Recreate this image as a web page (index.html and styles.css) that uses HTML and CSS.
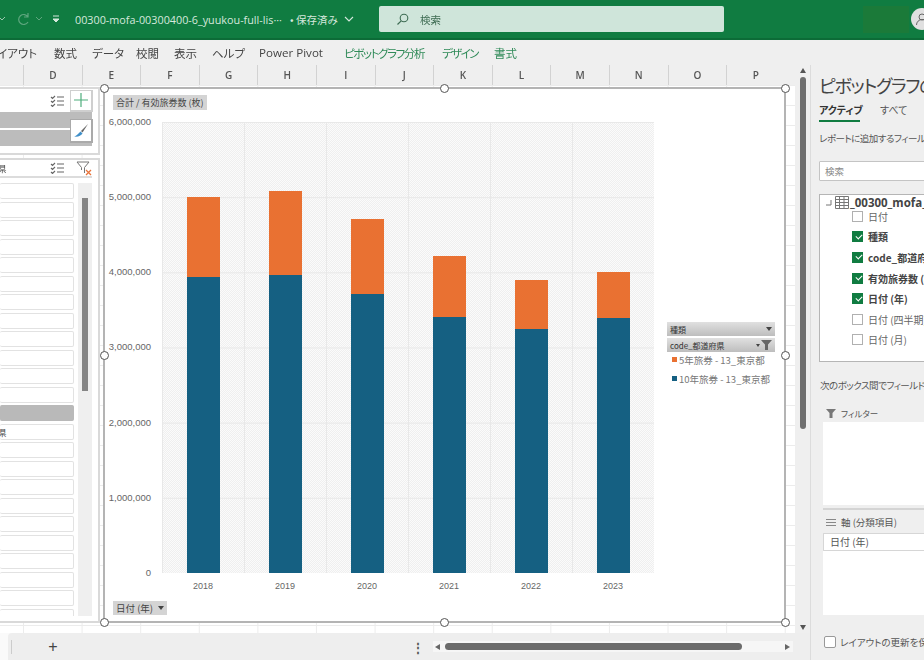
FILE: index.html
```html
<!DOCTYPE html>
<html lang="ja">
<head>
<meta charset="utf-8">
<title>Excel ピボットグラフ</title>
<link rel="stylesheet" href="styles.css">
</head>
<body>
<div class="app">
  <header class="titlebar">
    <svg class="ico chev-a" width="8" height="6" viewBox="0 0 8 6"><path d="M1 1l3 3 3-3" fill="none" stroke="#9cc7ae" stroke-width="1"/></svg>
    <svg class="ico redo" width="14" height="14" viewBox="0 0 14 14"><path d="M11 5A5 5 0 1 0 11 10M11 1v4H7" fill="none" stroke="#5ea67e" stroke-width="1.2"/></svg>
    <svg class="ico chev-b" width="8" height="6" viewBox="0 0 8 6"><path d="M1 1l3 3 3-3" fill="none" stroke="#5ea67e" stroke-width="1"/></svg>
    <svg class="ico custom" width="8" height="9" viewBox="0 0 8 9"><path d="M1 1h6M1 4l3 3 3-3z" fill="#d5e8dd" stroke="#d5e8dd" stroke-width="1"/></svg>
    <span class="filename">00300-mofa-00300400-6_yuukou-full-lis···</span>
    <span class="saved">• 保存済み</span>
    <svg class="ico chev-c" width="10" height="6" viewBox="0 0 10 6"><path d="M1 1l4 4 4-4" fill="none" stroke="#d5e8dd" stroke-width="1.1"/></svg>
    <div class="search">
      <svg width="13" height="13" viewBox="0 0 13 13"><circle cx="8" cy="5" r="3.8" fill="none" stroke="#3d6b52" stroke-width="1.1"/><path d="M5.2 7.8L1.5 11.5" stroke="#3d6b52" stroke-width="1.2"/></svg>
      <span>検索</span>
    </div>
    <div class="account"></div>
    <div class="avatar">
      <svg width="14" height="14" viewBox="0 0 14 14"><circle cx="7" cy="5" r="3" fill="none" stroke="#666" stroke-width="1"/><path d="M1.5 13a5.5 5.5 0 0 1 11 0" fill="none" stroke="#666" stroke-width="1"/></svg>
    </div>
  </header>

  <nav class="ribbon">
    <span class="tab first">レイアウト</span>
    <span class="tab t2">数式</span>
    <span class="tab t3">データ</span>
    <span class="tab t4">校閲</span>
    <span class="tab t5">表示</span>
    <span class="tab t6">ヘルプ</span>
    <span class="tab t7">Power Pivot</span>
    <span class="tab ctx t8">ピボットグラフ分析</span>
    <span class="tab ctx t9">デザイン</span>
    <span class="tab ctx t10">書式</span>
  </nav>

  <div class="content">
    <div class="workspace">
      <div class="upper">
        <div class="sheetcol">
          <div class="colheads">
            <span class="colhead">D</span><span class="colhead">E</span><span class="colhead">F</span><span class="colhead">G</span><span class="colhead">H</span><span class="colhead">I</span><span class="colhead">J</span><span class="colhead">K</span><span class="colhead">L</span><span class="colhead">M</span><span class="colhead">N</span><span class="colhead">O</span><span class="colhead">P</span>
          </div>
          <div class="sheet">
            <div class="slicers">
              <section class="slicer one">
                <div class="slicer-head one-head">
                  <svg class="multi" width="14" height="12" viewBox="0 0 14 12"><path d="M1 2l1.5 1.5L5 1M1 6l1.5 1.5L5 5M1 10l1.5 1.5L5 9M7 2h7M7 6h7M7 10h7" fill="none" stroke="#666" stroke-width="1.1"/></svg>
                  <div class="sl-btn"><svg width="16" height="16" viewBox="0 0 16 16"><path d="M8 1v14M1 8h14" stroke="#4fae7d" stroke-width="1.2"/></svg></div>
                </div>
                <div class="band"></div>
                <div class="band"></div>
                <div class="sl-btn brush"><svg width="16" height="16" viewBox="0 0 16 16"><path d="M15 1L8 8l1.5 1.5z" fill="#666"/><path d="M7.5 8.5l2 2C8 13 5 14 1 13.5c2-.5 3.500-2 6.500-5z" fill="#3f8fc9"/></svg></div>
              </section>
              <section class="slicer two">
                <div class="slicer-head two-head">
                  <span class="cut">県</span>
                  <svg class="multi" width="14" height="12" viewBox="0 0 14 12"><path d="M1 2l1.500 1.500L5 1M1 6l1.500 1.500L5 5M1 10l1.500 1.500L5 9M7 2h7M7 6h7M7 10h7" fill="none" stroke="#666" stroke-width="1.1"/></svg>
                  <svg class="clear" width="16" height="15" viewBox="0 0 16 15"><path d="M1 1h12L8.500 6.500V12" fill="none" stroke="#777" stroke-width="1"/><path d="M1 1l4.500 5.500V9" fill="none" stroke="#777" stroke-width="1"/><path d="M10 9l5 5M15 9l-5 5" stroke="#e8743b" stroke-width="1.3"/></svg>
                </div>
                <div class="slicer-body">
                  <div class="items">
                    <div class="item"></div><div class="item"></div><div class="item"></div><div class="item"></div><div class="item"></div><div class="item"></div><div class="item"></div><div class="item"></div><div class="item"></div><div class="item"></div><div class="item"></div><div class="item"></div>
                    <div class="item on"></div>
                    <div class="item"><span class="cut">県</span></div>
                    <div class="item"></div><div class="item"></div><div class="item"></div><div class="item"></div><div class="item"></div><div class="item"></div><div class="item"></div><div class="item"></div><div class="item"></div><div class="item"></div>
                  </div>
                  <div class="track"><div class="thumb"></div></div>
                </div>
              </section>
            </div>

            <div class="chart">
              <div class="title-cell"><span class="fieldbtn">合計 / 有効旅券数 (枚)</span></div>
              <div class="axis">
                <span class="tick">6,000,000</span><span class="tick">5,000,000</span><span class="tick">4,000,000</span><span class="tick">3,000,000</span><span class="tick">2,000,000</span><span class="tick">1,000,000</span><span class="tick">0</span>
              </div>
              <div class="plot">
                <div class="col"><div class="seg orange" style="height:17.74%"></div><div class="seg blue" style="height:65.63%"></div></div>
                <div class="col"><div class="seg orange" style="height:18.63%"></div><div class="seg blue" style="height:66.08%"></div></div>
                <div class="col"><div class="seg orange" style="height:16.63%"></div><div class="seg blue" style="height:61.86%"></div></div>
                <div class="col"><div class="seg orange" style="height:13.53%"></div><div class="seg blue" style="height:56.76%"></div></div>
                <div class="col"><div class="seg orange" style="height:10.86%"></div><div class="seg blue" style="height:54.10%"></div></div>
                <div class="col"><div class="seg orange" style="height:10.20%"></div><div class="seg blue" style="height:56.54%"></div></div>
              </div>
              <div class="legend">
                <div class="lg-btn"><span>種類</span><i class="tri"></i></div>
                <div class="lg-btn"><span>code_都道府県</span><i class="tri small"></i><svg width="11" height="10" viewBox="0 0 11 10"><path d="M0 0h11L7 4.500V10H4V4.500z" fill="#666"/></svg></div>
                <div class="lg-item"><i class="swatch sw-o"></i>5年旅券 - 13_東京都</div>
                <div class="lg-item"><i class="swatch sw-b"></i>10年旅券 - 13_東京都</div>
              </div>
              <div class="years">
                <span>2018</span><span>2019</span><span>2020</span><span>2021</span><span>2022</span><span>2023</span>
              </div>
              <div class="axisbtn"><span class="fieldbtn">日付 (年)<i class="tri"></i></span></div>

              <i class="handle h-tl"></i><i class="handle h-tc"></i><i class="handle h-tr"></i>
              <i class="handle h-ml"></i><i class="handle h-mr"></i>
              <i class="handle h-bl"></i><i class="handle h-bc"></i><i class="handle h-br"></i>
            </div>
          </div>
        </div>
        <div class="vscroll">
          <i class="arrow up"></i>
          <div class="vthumb"></div>
          <i class="arrow down"></i>
        </div>
      </div>
      <footer class="tabbar">
        <div class="sheet-stub"><span>E</span></div>
        <div class="tabstrip">
          <span class="tabsep"></span>
          <span class="addsheet">+</span>
          <span class="dots">⋮</span>
          <div class="hscroll">
            <i class="arrow left"></i>
            <div class="hthumb"></div>
            <i class="arrow right"></i>
          </div>
        </div>
      </footer>
    </div>

    <aside class="panel">
      <h2 class="panel-title">ピボットグラフのフィールド</h2>
      <div class="panel-tabs">
        <span class="ptab active">アクティブ</span>
        <span class="ptab">すべて</span>
      </div>
      <p class="hint h1">レポートに追加するフィールドを選択してください:</p>
      <div class="psearch">検索</div>
      <div class="fields">
        <div class="root">
          <svg class="conn" width="7" height="6" viewBox="0 0 7 6"><path d="M6 0v5H1" fill="none" stroke="#777" stroke-width="1"/></svg>
          <svg class="tbl" width="14" height="13" viewBox="0 0 14 13"><path d="M.5.500h13v12H.5zM.5 3.500h13M.5 6.500h13M.5 9.500h13M4.500.500v12M9 .500v12" fill="none" stroke="#777" stroke-width="1"/></svg>
          <b>_00300_mofa_00300400</b>
        </div>
        <div class="frow first-row"><i class="cb"></i><span>日付</span></div>
        <div class="frow sel"><i class="cb on"></i><span>種類</span></div>
        <div class="frow sel"><i class="cb on"></i><span>code_都道府県</span></div>
        <div class="frow sel"><i class="cb on"></i><span>有効旅券数 (枚)</span></div>
        <div class="frow sel"><i class="cb on"></i><span>日付 (年)</span></div>
        <div class="frow"><i class="cb"></i><span>日付 (四半期)</span></div>
        <div class="frow"><i class="cb"></i><span>日付 (月)</span></div>
      </div>
      <p class="hint h2">次のボックス間でフィールドをドラッグしてください:</p>
      <div class="area-label a-filter">
        <svg width="10" height="9" viewBox="0 0 10 9"><path d="M0 0h10L6.500 4v5h-3V4z" fill="#777"/></svg>
        <span class="small">フィルター</span>
      </div>
      <div class="dropbox filter-box"></div>
      <div class="splitter"></div>
      <div class="area-label a-axis">
        <svg width="10" height="7" viewBox="0 0 10 7"><path d="M0 .500h10M0 3.500h10M0 6.500h10" stroke="#888" stroke-width="1"/></svg>
        <span>軸 (分類項目)</span>
      </div>
      <div class="dropbox axis-box"><div class="chip">日付 (年)</div></div>
      <label class="defer"><i class="cb big"></i><span>レイアウトの更新を保留する</span></label>
    </aside>
  </div>
</div>
</body>
</html>
```

FILE: styles.css
```css
* { box-sizing: border-box; }
html, body { margin: 0; padding: 0; }
body {
  width: 924px;
  height: 660px;
  overflow: hidden;
  background: #efefef;
  font-family: "Noto Sans CJK JP", "Noto Sans", sans-serif;
  font-feature-settings: "palt";
  color: #444;
}
i { display: block; font-style: normal; }
.app {
  width: 924px;
  height: 660px;
  display: flex;
  flex-direction: column;
  filter: blur(0.55px);
}

/* title bar */
.titlebar {
  height: 40px;
  flex: none;
  background: #107c41;
  border-bottom: 2px solid #0c6b37;
  display: flex;
  align-items: center;
  color: #d5e8dd;
  font-size: 10.5px;
  padding-left: 0;
}
.ico { flex: none; }
.chev-a { margin-left: -2px; }
.redo { margin-left: 11px; }
.chev-b { margin-left: 4px; }
.custom { margin-left: 9px; }
.filename { margin-left: 15px; width: 210px; flex: none; white-space: nowrap; overflow: hidden; font-family: "Open Sans", sans-serif; font-size: 10.8px; }
.saved { margin-left: 5px; width: 52px; flex: none; white-space: nowrap; }
.chev-c { margin-left: 2px; }
.search {
  margin-left: 25px;
  width: 345px;
  height: 26px;
  flex: none;
  background: #cfe5da;
  border-radius: 2px;
  display: flex;
  align-items: center;
  gap: 11px;
  padding-left: 17px;
  color: #3d6b52;
  font-size: 10.5px;
}
.account { margin-left: 139px; width: 46px; height: 27px; flex: none; background: #1b7a39; }
.avatar {
  margin-left: 2px;
  width: 22px;
  height: 22px;
  flex: none;
  border-radius: 50%;
  background: #e0e0e0;
  display: flex;
  align-items: center;
  justify-content: center;
}

/* ribbon */
.ribbon {
  height: 25px;
  flex: none;
  background: #efefef;
  display: flex;
  align-items: center;
  font-size: 11.5px;
  color: #444;
  white-space: nowrap;
}
.tab { flex: none; }
.first { margin-left: -13px; width: 50px; }
.t2 { margin-left: 17px; width: 22px; }
.t3 { margin-left: 16px; width: 29px; }
.t4 { margin-left: 15px; width: 23px; }
.t5 { margin-left: 15px; width: 23px; }
.t6 { margin-left: 15px; width: 29px; }
.t7 { margin-left: 18px; width: 66px; font-family: "Open Sans", sans-serif; font-size: 11.6px; }
.t8 { margin-left: 19px; width: 81px; letter-spacing: -1.4px; }
.t9 { margin-left: 17px; width: 36px; letter-spacing: -1.6px; }
.t10 { margin-left: 16px; }
.ctx { color: #2f8a58; }

/* layout */
.content { flex: 1; display: flex; min-height: 0; }
.workspace { width: 810px; flex: none; display: flex; flex-direction: column; }
.upper { flex: 1; display: flex; min-height: 0; }
.sheetcol { width: 795px; flex: none; display: flex; flex-direction: column; }

.colheads {
  height: 20px;
  flex: none;
  display: flex;
  padding-left: 23px;
  background: #efefef;
  overflow: hidden;
}
.colhead {
  flex: none;
  width: 58.6px;
  border-left: 1px solid #d2d2d2;
  text-align: center;
  font-size: 10px;
  line-height: 20px;
  color: #555;
  font-family: "Open Sans", sans-serif;
  font-weight: 600;
}
.sheet {
  flex: 1;
  position: relative;
  background-color: #fff;
  background-image:
    linear-gradient(to right, #ececec 1px, transparent 1px),
    linear-gradient(to bottom, #ececec 1px, transparent 1px);
  background-size: 58.6px 20px, 58.6px 20px;
  background-position: 23px 0, 0 0;
}

/* slicers */
.slicers { position: absolute; left: 0; top: 2px; width: 100px; height: 536px; display: flex; flex-direction: column; gap: 3px; }
.slicer { position: relative; background: #fff; border: 2px solid #d9d9d9; border-left: 0; }
.slicer.one { height: 69px; }
.slicer.two { flex: 1; }
.slicer-head { display: flex; align-items: center; }
.one-head { height: 23px; padding-left: 50px; gap: 6px; }
.two-head { height: 18px; margin-right: 6px; border-bottom: 2px solid #dcdcdc; position: relative; padding-left: 50px; gap: 12px; }
.two-head .cut { position: absolute; left: -2px; }
.cut { font-size: 8.500px; color: #444; }
.sl-btn {
  width: 23px;
  height: 22px;
  background: #fff;
  border: 1px solid #cfcfcf;
  border-right-width: 2px;
  border-bottom-width: 2px;
  display: flex;
  align-items: center;
  justify-content: center;
  z-index: 1;
  position: relative;
}
.brush { position: absolute; left: 70px; top: 30px; width: 23px; height: 24px; border-color: #aaa; }
.band { height: 16px; width: 92px; background: #bcbcbc; margin-bottom: 2px; }
.slicer-body { display: flex; padding-top: 5px; height: 443px; }
.items { width: 74px; height: 433px; overflow: hidden; display: flex; flex-direction: column; gap: 2.500px; flex: none; }
.item {
  flex: none;
  height: 16px;
  background: #fff;
  border: 1px solid #e2e2e2;
  border-left: 0;
  border-radius: 2px;
  display: flex;
  align-items: center;
}
.item.on { background: #b9b9b9; border-color: #b9b9b9; }
.item .cut { margin-left: -2px; }
.track { width: 14px; height: 433px; margin-left: 4px; background: #efefef; padding-top: 15px; flex: none; }
.thumb { width: 6px; height: 193px; margin-left: 4px; background: #858585; }

/* chart */
.chart {
  position: absolute;
  left: 103px;
  top: 2px;
  width: 683px;
  height: 536px;
  background: #fff;
  border: 2px solid #b4b4b4;
  display: grid;
  grid-template-columns: 57px 492px 1fr;
  grid-template-rows: 33px 451px 28px 1fr;
}
.title-cell { grid-column: 1 / 4; padding: 6px 0 0 8px; display: flex; align-items: flex-start; }
.fieldbtn {
  display: flex;
  align-items: center;
  height: 15px;
  padding: 0 3px;
  background: #d4d4d4;
  font-size: 9px;
  color: #444;
  white-space: nowrap;
}
.axis {
  display: flex;
  flex-direction: column;
  justify-content: space-between;
  align-items: flex-end;
  padding-right: 11px;
  font-family: "Liberation Sans", sans-serif;
  font-size: 9.500px;
  color: #666;
}
.tick { height: 0; line-height: 0; display: block; }
.plot {
  display: grid;
  grid-template-columns: repeat(6, 1fr);
  background-image:
    linear-gradient(to right, #e8e8e8 1px, transparent 1px),
    linear-gradient(to bottom, #e8e8e8 1px, transparent 1px),
    repeating-conic-gradient(#efefef 0 25%, #fbfbfb 0 50%);
  background-size: 82px 100%, 100% 75.170px, 2px 2px;
}
.col { display: flex; flex-direction: column; justify-content: flex-end; align-items: center; min-height: 0; }
.seg { width: 33px; flex: none; }
.orange { background: #e97132; }
.blue { background: #156082; }

.legend { grid-column: 3; grid-row: 2; padding: 200px 0 0 13px; }
.lg-btn {
  width: 108px;
  height: 14px;
  margin-bottom: 2px;
  padding: 0 3px;
  background: linear-gradient(to bottom, #e0e0e0, #bdbdbd);
  display: flex;
  align-items: center;
  font-size: 8px;
  color: #333;
  white-space: nowrap;
}
.lg-btn span { flex: 1; }
.tri { width: 0; height: 0; border-left: 3.500px solid transparent; border-right: 3.500px solid transparent; border-top: 4px solid #444; }
.tri.small { border-width: 3px 2.500px 0; margin-right: 1px; }
.lg-item {
  display: flex;
  align-items: center;
  gap: 2px;
  height: 19px;
  padding-left: 5px;
  font-size: 9.500px;
  color: #777;
  white-space: nowrap;
}
.lg-btn + .lg-item { margin-top: -4px; }
.swatch { width: 5px; height: 5px; flex: none; }
.sw-o { background: #e97132; }
.sw-b { background: #156082; }

.years {
  grid-column: 2;
  grid-row: 3;
  display: grid;
  grid-template-columns: repeat(6, 1fr);
  text-align: center;
  font-family: "Liberation Sans", sans-serif;
  font-size: 9px;
  color: #666;
  line-height: 26px;
}
.axisbtn { grid-column: 1 / 3; grid-row: 4; padding-left: 8px; display: flex; align-items: flex-start; }
.axisbtn .fieldbtn { height: 14px; gap: 5px; padding: 0 3px; font-size: 9.500px; }

.handle {
  position: absolute;
  width: 9px;
  height: 9px;
  background: #fff;
  border: 1.500px solid #555;
  border-radius: 50%;
  z-index: 2;
}
.h-tl { left: -5.500px; top: -5.500px; }
.h-tc { left: 335px; top: -5.500px; }
.h-tr { right: -5.500px; top: -5.500px; }
.h-ml { left: -5.500px; top: 262px; }
.h-mr { right: -5.500px; top: 262px; }
.h-bl { left: -5.500px; bottom: -5.500px; }
.h-bc { left: 335px; bottom: -5.500px; }
.h-br { right: -5.500px; bottom: -5.500px; }

/* scrollbars */
.vscroll { width: 15px; flex: none; background: #efefef; position: relative; display: flex; flex-direction: column; align-items: center; padding-top: 3px; }
.vthumb { width: 6px; height: 352px; margin-top: 4px; background: #6f6f6f; border-radius: 3px; }
.arrow { width: 0; height: 0; flex: none; }
.arrow.up { border-left: 3.500px solid transparent; border-right: 3.500px solid transparent; border-bottom: 5px solid #555; }
.arrow.down { margin-top: auto; margin-bottom: 3px; border-left: 3.500px solid transparent; border-right: 3.500px solid transparent; border-top: 5px solid #555; }
.arrow.left { border-top: 3.500px solid transparent; border-bottom: 3.500px solid transparent; border-right: 5px solid #666; }
.arrow.right { margin-left: auto; border-top: 3.500px solid transparent; border-bottom: 3.500px solid transparent; border-left: 5px solid #666; }

/* bottom bar */
.tabbar { height: 27px; flex: none; display: flex; background: #fafafa; }
.sheet-stub { width: 8px; flex: none; overflow: hidden; background: #fafafa; font-size: 10px; color: #107c41; padding-top: 7px; }
.sheet-stub span { display: block; margin-left: -6px; }
.tabstrip {
  flex: 1;
  background: #eeeeee;
  border-top-left-radius: 4px;
  display: flex;
  align-items: center;
}
.tabsep { width: 1px; height: 14px; margin-left: 3px; background: #ccc; flex: none; }
.addsheet { margin-left: 35px; width: 12px; flex: none; text-align: center; font-size: 16px; line-height: 1; color: #444; font-family: "Liberation Sans", sans-serif; }
.dots { margin-left: 353px; font-size: 12px; width: 8px; flex: none; color: #555; font-weight: bold; }
.hscroll {
  margin-left: 13px;
  width: 360px;
  height: 11px;
  flex: none;
  background: #f6f6f6;
  display: flex;
  align-items: center;
  padding: 0 3px 0 2px;
}
.hthumb { width: 297px; height: 7px; margin-left: 5px; background: #6b6b6b; border-radius: 3.500px; }

/* panel */
.panel {
  flex: 1;
  background: #efefef;
  border-left: 1px solid #dcdcdc;
  overflow: hidden;
  white-space: nowrap;
  padding-left: 8px;
  font-size: 9.500px;
  color: #555;
}
.panel-title { margin: 8px 0 0; font-size: 18px; font-weight: 400; line-height: 24px; color: #444; letter-spacing: -1.3px; }
.panel-tabs { display: flex; gap: 20px; margin-top: 5px; height: 20px; }
.ptab { width: 41px; height: 20px; line-height: 16px; font-size: 10px; flex: none; }
.ptab.active { font-weight: 700; color: #333; border-bottom: 2px solid #107c41; }
.hint { margin: 0; font-size: 9.500px; line-height: 14px; color: #555; letter-spacing: -.5px; }
.h1 { margin-top: 9px; }
.psearch {
  margin-top: 16px;
  width: 120px;
  height: 20px;
  background: #fff;
  border: 1px solid #c4c4c4;
  border-radius: 1px;
  padding-left: 5px;
  font-size: 9.500px;
  line-height: 18px;
  color: #888;
}
.fields {
  margin-top: 13px;
  width: 130px;
  height: 168px;
  background: #fff;
  border: 1px solid #b5b5b5;
  padding-top: 1px;
}
.root { display: flex; align-items: center; height: 13px; padding-left: 5px; }
.conn { margin-right: 3px; flex: none; }
.tbl { flex: none; }
.root b { margin-left: 1px; font-size: 11.500px; font-family: "Open Sans", sans-serif; color: #444; }
.frow { display: flex; align-items: center; gap: 5px; height: 20.600px; padding-left: 32px; font-size: 10px; color: #666; }
.frow.sel { font-weight: 700; color: #444; }
.first-row { margin-top: -3px; }
.cb { width: 11px; height: 11px; flex: none; background: #fff; border: 1px solid #b0b0b0; position: relative; }
.cb.on { background: #107c41; border-color: #107c41; }
.cb.on::after {
  content: "";
  position: absolute;
  left: 2.500px;
  top: 1.500px;
  width: 5px;
  height: 3px;
  border-left: 1.300px solid #fff;
  border-bottom: 1.300px solid #fff;
  transform: rotate(-45deg);
}
.h2 { margin-top: 16px; margin-left: 1px; padding-top: 0; }
.area-label { display: flex; align-items: center; gap: 5px; margin-left: 7px; height: 14px; font-size: 9.500px; color: #555; }
.area-label .small { font-size: 8.500px; }
.a-filter { margin-top: 14px; }
.dropbox { margin-left: 4px; width: 110px; background: #fff; }
.filter-box { margin-top: 2px; height: 83px; }
.splitter { margin: 3px 0 0 4px; width: 110px; height: 2px; background: #d4d4d4; }
.a-axis { margin-top: 5px; }
.axis-box { margin-top: 4px; height: 82px; }
.chip { height: 18px; border: 1px solid #d6d6d6; border-right: 0; border-radius: 1px; padding-left: 6px; font-size: 10px; line-height: 16px; color: #555; }
.defer { display: flex; align-items: center; gap: 4px; margin: 20px 0 0 5px; font-size: 9.500px; color: #555; }
.cb.big { width: 12px; height: 12px; border-radius: 2px; border-color: #999; }
```
